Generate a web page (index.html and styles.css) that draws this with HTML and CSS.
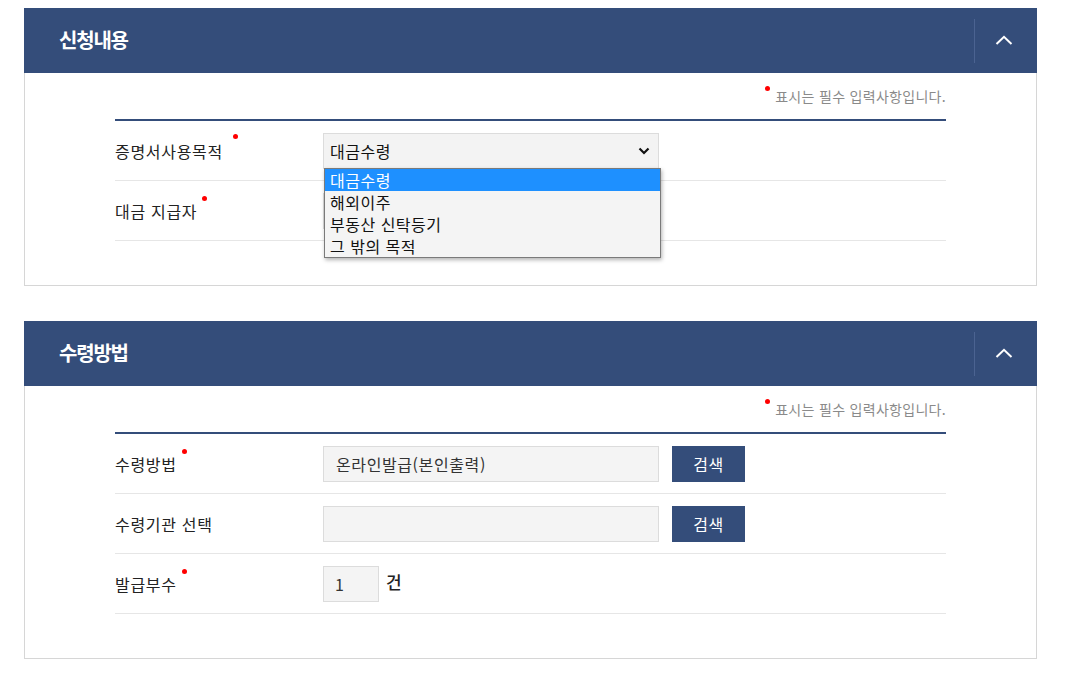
FILE: index.html
```html
<!DOCTYPE html>
<html lang="ko">
<head>
<meta charset="utf-8">
<title>신청내용</title>
<link rel="stylesheet" href="styles.css">
</head>
<body>
<div class="page">
  <section class="panel">
    <header class="panel-head">
      <h2 class="panel-title">신청내용</h2>
      <button class="toggle" type="button" aria-label="접기">
        <svg width="18" height="10" viewBox="0 0 18 10"><path d="M1.5 9 L9 1.8 L16.5 9" fill="none" stroke="#fff" stroke-width="2"/></svg>
      </button>
    </header>
    <div class="panel-body">
      <p class="note"><span class="dot"></span>표시는 필수 입력사항입니다.</p>
      <div class="form">
        <div class="row">
          <div class="label">증명서사용목적<span class="req wide"></span></div>
          <div class="field">
            <div class="select-wrap">
              <div class="select">
                <span>대금수령</span>
                <svg width="12" height="8" viewBox="0 0 12 8"><path d="M1.5 1.5 L6 6 L10.5 1.5" fill="none" stroke="#111" stroke-width="2.2"/></svg>
              </div>
              <ul class="dropdown">
                <li class="on">대금수령</li>
                <li>해외이주</li>
                <li>부동산 신탁등기</li>
                <li>그 밖의 목적</li>
              </ul>
            </div>
          </div>
        </div>
        <div class="row">
          <div class="label">대금 지급자<span class="req"></span></div>
          <div class="field"><div class="box"></div></div>
        </div>
      </div>
    </div>
  </section>

  <section class="panel">
    <header class="panel-head">
      <h2 class="panel-title">수령방법</h2>
      <button class="toggle" type="button" aria-label="접기">
        <svg width="18" height="10" viewBox="0 0 18 10"><path d="M1.5 9 L9 1.8 L16.5 9" fill="none" stroke="#fff" stroke-width="2"/></svg>
      </button>
    </header>
    <div class="panel-body">
      <p class="note"><span class="dot"></span>표시는 필수 입력사항입니다.</p>
      <div class="form">
        <div class="row">
          <div class="label">수령방법<span class="req"></span></div>
          <div class="field">
            <div class="box">온라인발급(본인출력)</div>
            <button class="btn" type="button">검색</button>
          </div>
        </div>
        <div class="row">
          <div class="label">수령기관 선택</div>
          <div class="field">
            <div class="box"></div>
            <button class="btn" type="button">검색</button>
          </div>
        </div>
        <div class="row">
          <div class="label">발급부수<span class="req"></span></div>
          <div class="field">
            <div class="box small">1</div>
            <span class="unit">건</span>
          </div>
        </div>
      </div>
    </div>
  </section>
</div>
</body>
</html>
```

FILE: styles.css
```css
* { box-sizing: border-box; }
html, body { margin: 0; padding: 0; background: #fff; }
body {
  font-family: "Noto Sans CJK KR", "Noto Sans", sans-serif;
  color: #222;
}
.page {
  width: 1071px;
  padding: 8px 34px 0 24px;
  display: flex;
  flex-direction: column;
  gap: 35px;
}
.panel { width: 1013px; }
.panel-head {
  height: 65px;
  background: #344d7a;
  display: flex;
  align-items: center;
  justify-content: space-between;
  padding-left: 35px;
}
.panel-title {
  margin: 0;
  color: #fff;
  font-size: 20px;
  font-weight: 700;
  letter-spacing: -1.2px;
  line-height: 1;
  margin-top: -2px;
}
.toggle {
  width: 63px;
  height: 44px;
  border: 0;
  border-left: 1px solid #4b6391;
  background: transparent;
  display: flex;
  align-items: center;
  justify-content: center;
  padding: 0 4px 2px 0;
}
.panel-body {
  border: 1px solid #d6d6d6;
  border-top: 0;
  padding: 13px 90px 44px 90px;
}
.note {
  margin: 0;
  height: 20px;
  text-align: right;
  font-size: 14px;
  line-height: 20px;
  color: #8a8a8a;
  letter-spacing: 0.3px;
}
.note .dot {
  display: inline-block;
  width: 5px;
  height: 5px;
  border-radius: 50%;
  background: #f00;
  vertical-align: top;
  margin: 0 5px 0 0;
}
.form {
  margin-top: 13px;
  border-top: 2px solid #344d7a;
}
.row {
  display: flex;
  align-items: center;
  height: 60px;
  border-bottom: 1px solid #e6e6e6;
}
.label {
  width: 208px;
  font-size: 16px;
  color: #222;
  letter-spacing: 0.7px;
  line-height: 20px;
  display: flex;
  align-items: flex-start;
}
.req {
  display: inline-block;
  width: 5px;
  height: 5px;
  border-radius: 50%;
  background: #f00;
  margin: -5px 0 0 5px;
}
.req.wide { margin-left: 10px; margin-top: -7px; }
.field {
  display: flex;
  align-items: center;
  gap: 13px;
}
.select-wrap { position: relative; }
.select {
  width: 336px;
  height: 36px;
  background: #f3f3f3;
  border: 1px solid #dcdcdc;
  display: flex;
  align-items: center;
  justify-content: space-between;
  padding: 0 8px 0 6px;
  font-size: 16px;
  letter-spacing: 0.5px;
  color: #111;
}
.dropdown {
  position: absolute;
  left: 1px;
  top: 35px;
  width: 337px;
  margin: 0;
  padding: 0;
  list-style: none;
  background: #f4f4f4;
  border: 1px solid #7a7a7a;
  box-shadow: 1px 2px 4px rgba(0,0,0,0.3);
  z-index: 5;
}
.dropdown li {
  height: 22px;
  line-height: 22px;
  font-size: 16px;
  letter-spacing: 0.5px;
  padding-left: 5px;
  color: #111;
}
.dropdown li.on { background: #1e90ff; color: #fff; }
.box {
  width: 336px;
  height: 36px;
  background: #f4f4f4;
  border: 1px solid #dcdcdc;
  font-size: 16px;
  letter-spacing: 0.6px;
  color: #333;
  display: flex;
  align-items: center;
  padding-left: 12px;
}
.box.small { width: 56px; padding-left: 11px; }
.btn {
  width: 73px;
  height: 36px;
  border: 0;
  background: #344d7a;
  color: #fff;
  font-family: inherit;
  font-size: 16px;
  letter-spacing: 0.5px;
  padding: 0;
}
.unit {
  margin-left: -6px;
  font-size: 17px;
  font-weight: 500;
  color: #222;
  margin-top: -4px;
}
```
